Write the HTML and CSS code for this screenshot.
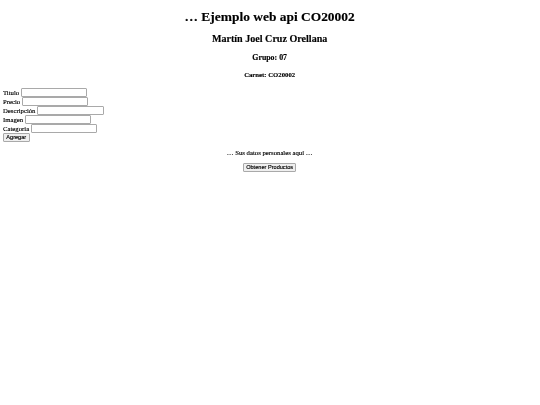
FILE: index.html
```html
<!DOCTYPE html>
<html>
<head>
<meta charset="utf-8">
<link rel="stylesheet" href="styles.css">
</head>
<body>
<header class="head">
  <h1 class="title">… Ejemplo web api CO20002</h1>
  <h2 class="name">Martín Joel Cruz Orellana</h2>
  <h3 class="group">Grupo: 07</h3>
  <h4 class="carnet">Carnet: CO20002</h4>
</header>
<form class="form">
  <div class="row"><label class="lbl">Titulo</label><input class="field" type="text"></div>
  <div class="row"><label class="lbl">Precio</label><input class="field" type="text"></div>
  <div class="row"><label class="lbl">Descripción</label><input class="field" type="text"></div>
  <div class="row"><label class="lbl">Imagen</label><input class="field" type="text"></div>
  <div class="row"><label class="lbl">Categoria</label><input class="field" type="text"></div>
  <div class="row"><button class="btn" type="button">Agregar</button></div>
</form>
<section class="data">
  <p class="info">… Sus datos personales aquí …</p>
  <button class="btn" type="button">Obtener Productos</button>
</section>
</body>
</html>
```
FILE: styles.css
```css
html {
  background: #fff;
}
body {
  margin: 0 3.36px 3.36px;
  font-family: "Liberation Serif", "Times New Roman", serif;
  font-size: 6.72px;
  line-height: 7.72px;
  color: #000;
  -webkit-text-stroke: 0.15px #000;
  will-change: transform;
}
.head {
  text-align: center;
}
.title {
  font-size: 13.44px;
  line-height: 15.45px;
  margin: 9px 0;
}
.name {
  font-size: 10.08px;
  line-height: 11.6px;
  margin: 8.37px 0;
}
.group {
  font-size: 7.86px;
  line-height: 9.03px;
  margin: 7.86px 0;
}
.carnet {
  font-size: 6.72px;
  line-height: 7.72px;
  margin: 8.94px 0;
}
.form {
  margin: 0;
  display: flex;
  flex-direction: column;
}
.row {
  height: 9px;
  display: flex;
  align-items: center;
  gap: 1.68px;
}
.field {
  width: 66.5px;
  height: 8.4px;
  box-sizing: border-box;
  border: 1px solid #a9a9a9;
  border-radius: 1px;
  padding: 0 1px;
  margin: 0;
  font-size: 5.6px;
  background: #fff;
}
.btn {
  font-family: "Liberation Sans", Arial, sans-serif;
  font-size: 5.6px;
  line-height: 6.4px;
  height: 8.6px;
  box-sizing: border-box;
  padding: 0 2.3px;
  margin: 0;
  border: 1px solid #a9a9a9;
  border-radius: 1px;
  background: #efefef;
  color: #000;
}
.data {
  text-align: center;
}
.info {
  margin: 6.72px 0;
}
```
